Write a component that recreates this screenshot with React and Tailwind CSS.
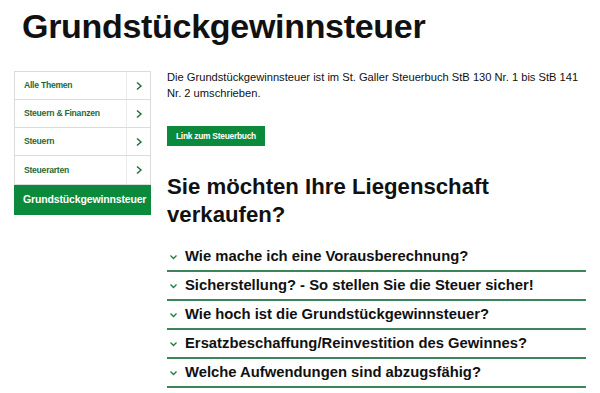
import React from "react";

const side = ["Alle Themen", "Steuern & Finanzen", "Steuern", "Steuerarten"];
const acc = [
  "Wie mache ich eine Vorausberechnung?",
  "Sicherstellung? - So stellen Sie die Steuer sicher!",
  "Wie hoch ist die Grundstückgewinnsteuer?",
  "Ersatzbeschaffung/Reinvestition des Gewinnes?",
  "Welche Aufwendungen sind abzugsfähig?",
];

function Chev() {
  return (
    <svg width="8" height="10" viewBox="0 0 8 10" fill="none">
      <path d="M2 1.5 L6 5 L2 8.5" stroke="#1d6b3a" strokeWidth="1.4" />
    </svg>
  );
}

function Down() {
  return (
    <svg width="9" height="6" viewBox="0 0 9 6" fill="none">
      <path d="M1.5 1.5 L4.5 4.5 L7.5 1.5" stroke="#1f7a45" strokeWidth="1.3" />
    </svg>
  );
}

export default function App() {
  return (
    <div className="w-[600px] h-[393px] bg-white overflow-hidden" style={{ fontFamily: '"Liberation Sans", Arial, sans-serif' }}>
      <h1 className="pl-[22px] pt-[4px] text-[34px] leading-[44px] font-bold text-[#111] tracking-[-0.3px]">Grundstückgewinnsteuer</h1>
      <div className="flex mt-[23px] pl-[14px]">
        <div className="w-[137px] shrink-0">
          <div className="border border-[#dcdcdc]">
            {side.map((s) => (
              <div key={s} className="flex h-[28px] border-b border-[#dcdcdc] last:border-b-0">
                <div className="flex-1 flex items-center pl-[9px] text-[8.6px] tracking-[-0.25px] font-bold text-[#1d6b3a]">{s}</div>
                <div className="w-[24px] border-l border-[#ececec] flex items-center justify-center"><Chev /></div>
              </div>
            ))}
          </div>
          <div className="h-[30px] bg-[#0b8a3c] flex items-center pl-[9px] text-white font-bold text-[10.5px] tracking-[-0.15px] whitespace-nowrap">Grundstückgewinnsteuer</div>
        </div>
        <div className="ml-[16px] w-[425px]">
          <p className="text-[11.15px] leading-[16px] text-[#111] -mt-[2px]">Die Grundstückgewinnsteuer ist im St. Galler Steuerbuch StB 130 Nr. 1 bis StB 141 Nr. 2 umschrieben.</p>
          <div className="mt-[25px] inline-flex items-center h-[20px] px-[9px] bg-[#0b8a3c] text-white font-bold text-[8.4px] tracking-[-0.25px]">Link zum Steuerbuch</div>
          <h2 className="mt-[27px] text-[22.2px] leading-[28px] font-bold text-[#111]">Sie möchten Ihre Liegenschaft<br />verkaufen?</h2>
          <div className="mt-[14px] w-[419px]">
            {acc.map((a) => (
              <div key={a} className="h-[29px] flex items-center gap-[7px] border-b-2 border-[#3a865a]">
                <span className="pl-[2px] flex items-center"><Down /></span>
                <span className="text-[14.8px] font-bold text-[#111]">{a}</span>
              </div>
            ))}
          </div>
        </div>
      </div>
    </div>
  );
}
